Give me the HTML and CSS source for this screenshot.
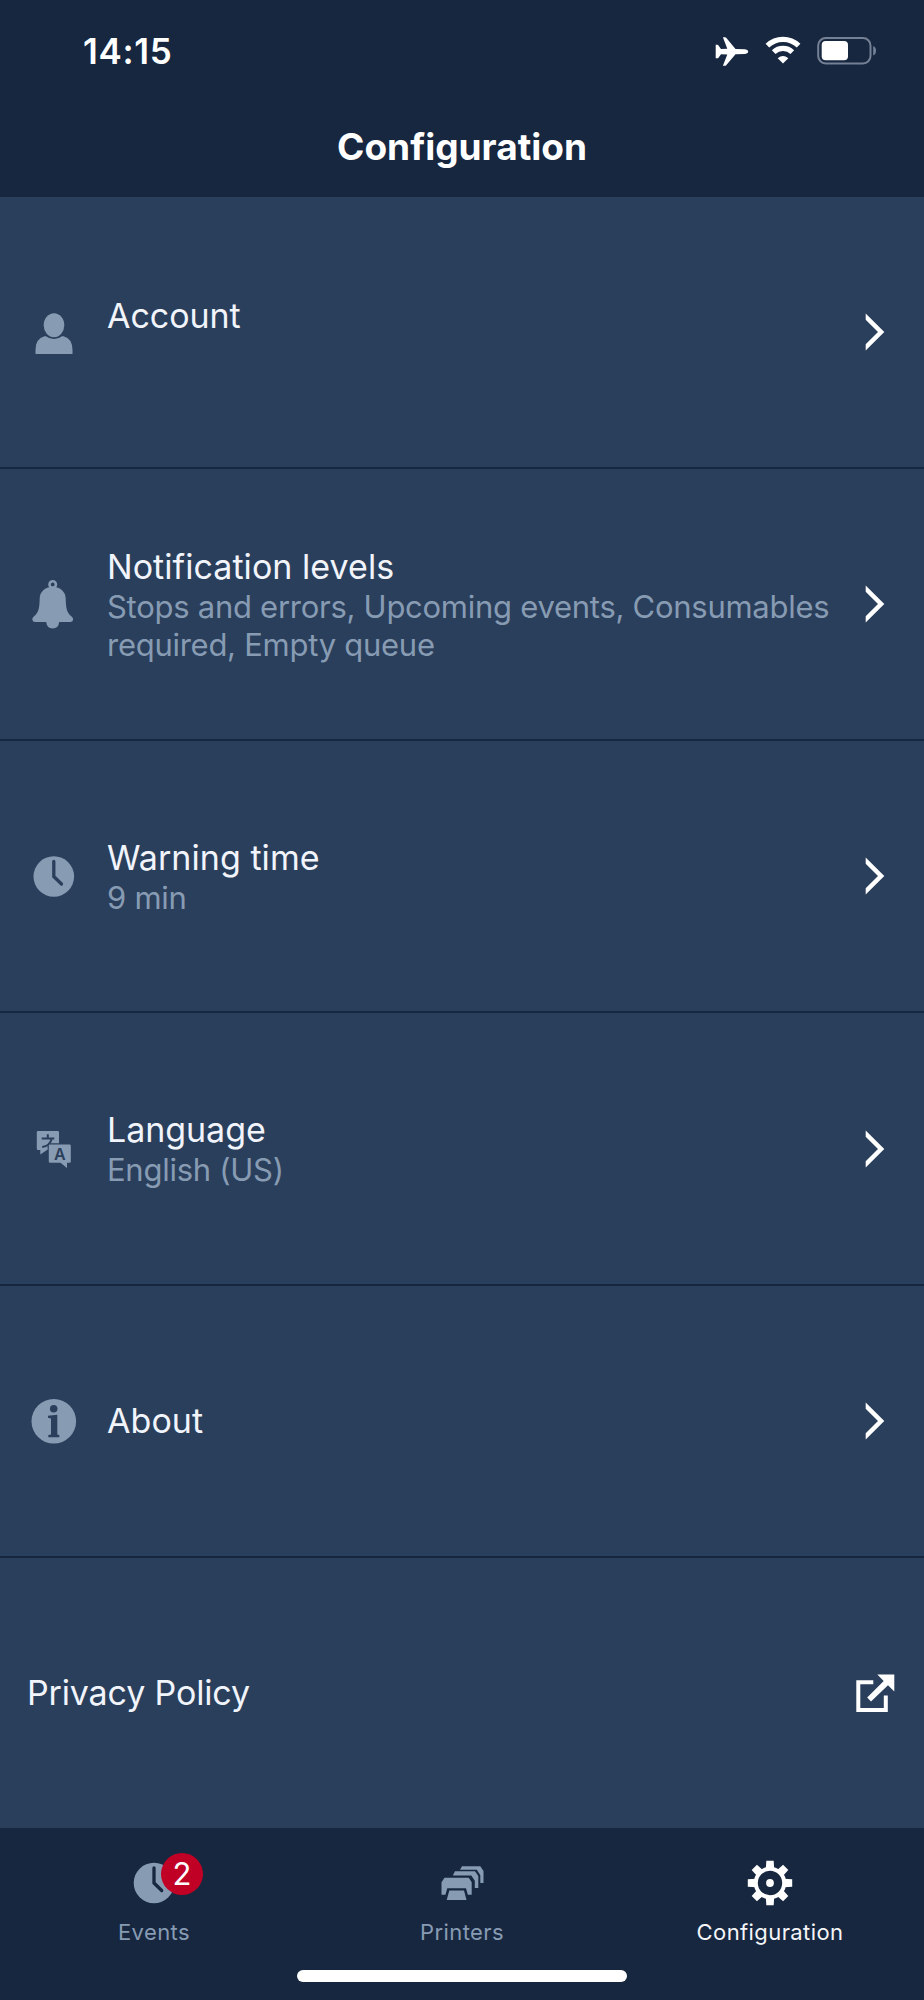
FILE: index.html
```html
<!DOCTYPE html>
<html lang="en">
<head>
<meta charset="utf-8">
<title>Configuration</title>
<link rel="stylesheet" href="styles.css">
</head>
<body>
<div class="screen">
  <header class="header">
    <div class="status">
      <span class="time">14:15</span>
      <svg class="status-icons" width="164" height="32" viewBox="0 0 164 32">
        <path fill="#fff" d="M33 13.2 C35.500 13.500 36.200 15 36.200 15.500 C36.200 16.300 35.500 17.600 33 17.900 L23.500 18.200 L14.200 29.200 Q13.800 29.700 13 29.700 L10.900 29.700 L15.300 18.400 L9 18.200 L6.300 21.900 Q6 22.300 5.500 22.300 L3.700 22.300 L3.700 8.800 L5.500 8.800 Q6 8.800 6.300 9.200 L9 12.900 L15.300 12.700 L10.900 1.200 L13 1.200 Q13.800 1.200 14.200 1.800 L23.500 12.900Z"/>
        <g fill="none" stroke="#fff" stroke-width="5.200">
          <path d="M55.400 9.700 A22.500 22.500 0 0 1 86.600 9.700"/>
          <path d="M61.700 16.200 A13.400 13.400 0 0 1 80.300 16.200"/>
        </g>
        <path fill="#fff" d="M71 27.600 L65.700 22.200 Q71 18 76.300 22.200Z"/>
        <rect x="106.200" y="2" width="52.300" height="25.500" rx="7.500" fill="none" stroke="#758094" stroke-width="2"/>
        <rect x="109.700" y="5" width="26.300" height="19.300" rx="4" fill="#fff"/>
        <path fill="#758094" d="M161.200 10 Q164 11 164 14.700 Q164 18.300 161.200 19.400Z"/>
      </svg>
    </div>
    <h1 class="title">Configuration</h1>
  </header>

  <main class="list">
    <a class="row">
      <svg class="icon" width="44" height="50" viewBox="0 0 44 50"><g fill="#879bb3"><ellipse cx="22" cy="18.200" rx="10.300" ry="12"/><path d="M3.500 47 V43 Q3.500 31.500 12.500 29.200 H14 Q17.500 32 22 32 Q26.500 32 30 29.200 H31.500 Q40.500 31.500 40.500 43 V47Z"/></g></svg>
      <div class="body body-raised"><div class="name">Account</div></div>
      <svg class="chevron" width="20" height="38" viewBox="0 0 20 38"><path fill="#fff" d="M.7 .5 L19.300 19 L.7 37.500 V31.300 L13 19 L.7 6.700Z"/></svg>
    </a>
    <a class="row">
      <svg class="icon" width="44" height="50" viewBox="0 0 44 50"><g fill="#879bb3"><circle cx="20.700" cy="5.500" r="3.200" fill="none" stroke="#879bb3" stroke-width="2.600"/><path d="M20.700 7.500 C28.500 8 33.500 12.800 33.700 19.500 C34 29 34.500 33.500 39.600 37.400 Q41.300 38.700 41.100 40.500 Q40.800 43 38.200 43 H27.200 Q26.500 49.500 20.700 49.500 Q14.900 49.500 14.200 43 H3.200 Q.6 43 .3 40.500 Q.1 38.700 1.800 37.400 C6.900 33.500 7.400 29 7.700 19.500 C7.900 12.800 12.900 8 20.700 7.500Z"/></g></svg>
      <div class="body body-levels"><div class="name name-wide">Notification levels</div><div class="detail">Stops and errors, Upcoming events, Consumables required, Empty queue</div></div>
      <svg class="chevron" width="20" height="38" viewBox="0 0 20 38"><path fill="#fff" d="M.7 .5 L19.300 19 L.7 37.500 V31.300 L13 19 L.7 6.700Z"/></svg>
    </a>
    <a class="row">
      <svg class="icon" width="44" height="50" viewBox="0 0 44 50"><circle cx="21.800" cy="25.500" r="20.300" fill="#879bb3"/><path d="M21.800 10.500 V25.500 L29.500 33" fill="none" stroke="#2a3f5c" stroke-width="3.300" stroke-linecap="round"/></svg>
      <div class="body body-pair"><div class="name name-wide">Warning time</div><div class="detail">9 min</div></div>
      <svg class="chevron" width="20" height="38" viewBox="0 0 20 38"><path fill="#fff" d="M.7 .5 L19.300 19 L.7 37.500 V31.300 L13 19 L.7 6.700Z"/></svg>
    </a>
    <a class="row">
      <svg class="icon" width="44" height="50" viewBox="0 0 44 50"><path fill="#879bb3" d="M6 7 H25.800 Q27 7 27 8.200 V19.200 H18 Q15.600 19.200 15.600 21.500 V26 H15 L8.300 30.500 V26 H6 Q4.800 26 4.800 24.800 V8.200 Q4.800 7 6 7Z"/><path fill="none" stroke="#2a3f5c" stroke-width="2" d="M9.700 14.500 H22.300 M15.800 10.200 V14.500 M19.800 14.500 Q18 22 10.200 23"/><path fill="#879bb3" d="M18 20.500 H37.600 Q38.800 20.500 38.800 21.700 V37.500 Q38.800 38.700 37.600 38.700 H35 V44 L28.500 38.700 H18 Q16.800 38.700 16.800 37.500 V21.700 Q16.800 20.500 18 20.500Z"/><text class="glyph" x="27.800" y="35.800" text-anchor="middle" fill="#2a3f5c">A</text></svg>
      <div class="body body-pair"><div class="name">Language</div><div class="detail">English (US)</div></div>
      <svg class="chevron" width="20" height="38" viewBox="0 0 20 38"><path fill="#fff" d="M.7 .5 L19.300 19 L.7 37.500 V31.300 L13 19 L.7 6.700Z"/></svg>
    </a>
    <a class="row">
      <svg class="icon icon-info" width="46" height="50" viewBox="0 0 46 50"><circle cx="22.800" cy="25.300" r="22.300" fill="#879bb3"/><g fill="#2a3f5c"><circle cx="22.700" cy="12.700" r="3.800"/><path d="M17 19.700 L26.300 18.700 V38.500 L28.300 39 V41.300 H17.300 V39 L20 38.500 V22.500 L17 21.700Z"/></g></svg>
      <div class="body"><div class="name name-wide">About</div></div>
      <svg class="chevron" width="20" height="38" viewBox="0 0 20 38"><path fill="#fff" d="M.7 .5 L19.300 19 L.7 37.500 V31.300 L13 19 L.7 6.700Z"/></svg>
    </a>
    <a class="row row-last">
      <div class="body"><div class="name name-privacy">Privacy Policy</div></div>
      <svg class="external" width="40" height="40" viewBox="0 0 40 40"><path fill="none" stroke="#fff" stroke-width="4" d="M17.300 9.300 H2.300 V37 H29.800 V22.500"/><path fill="#fff" d="M21.300 1.500 H38.300 V18.500 L32 12.300 L15 28.500 L11.200 24.500 L27.700 8Z"/></svg>
    </a>
  </main>

  <nav class="tabs">
    <a class="tab">
      <span class="tab-icon"><svg width="46" height="46" viewBox="0 0 46 46"><circle cx="23" cy="23" r="20.300" fill="#879bb3"/><path d="M23 8 V23 L30.700 30.500" fill="none" stroke="#172740" stroke-width="3.300" stroke-linecap="round"/></svg><span class="badge">2</span></span>
      <span class="label">Events</span>
    </a>
    <a class="tab">
      <span class="tab-icon"><svg width="46" height="46" viewBox="0 0 46 46"><g fill="#879bb3">
        <path d="M23 6.200 H41.300 L44.500 11 V23 H41.300 V15.200 L37.800 9.800 H21Z"/>
        <path d="M16 11.200 H36 L39.300 16 V28 H35.800 V20.800 L32.300 15.500 H13.800Z"/>
        <path d="M5.500 17.800 H29.700 L32.700 22.300 V34.800 H28.800 L27 28.300 H8.300 L6.400 34.800 H2.500 V22.300Z"/>
        <path d="M10.300 30.500 H25 L27.500 40 H7.700Z"/></g></svg></span>
      <span class="label">Printers</span>
    </a>
    <a class="tab tab-active">
      <span class="tab-icon"><svg width="46" height="46" viewBox="0 0 46 46"><g fill="#fff">
        <path id="tooth" d="M19.300 .8 H26.700 L27.200 9 H18.800Z"/>
        <use href="#tooth" transform="rotate(45 23 23)"/><use href="#tooth" transform="rotate(90 23 23)"/><use href="#tooth" transform="rotate(135 23 23)"/><use href="#tooth" transform="rotate(180 23 23)"/><use href="#tooth" transform="rotate(225 23 23)"/><use href="#tooth" transform="rotate(270 23 23)"/><use href="#tooth" transform="rotate(315 23 23)"/>
        <circle cx="23" cy="23" r="3.900"/></g><circle cx="23" cy="23" r="14.200" fill="none" stroke="#fff" stroke-width="4"/></svg></span>
      <span class="label">Configuration</span>
    </a>
    <span class="home"></span>
  </nav>
</div>
</body>
</html>
```
FILE: styles.css
```css
* { box-sizing: border-box; }
body { margin: 0; background: #172740; font-family: Inter, "Liberation Sans", sans-serif; }
.screen { width: 924px; height: 2000px; display: flex; flex-direction: column; background: #2a3f5c; overflow: hidden; }
.header { height: 196.500px; flex: none; background: #172740; color: #fff; }
.status { height: 101px; padding: 0 48px 0 83px; display: flex; align-items: center; justify-content: space-between; }
.time { font-size: 35px; font-weight: 600; line-height: 40px; letter-spacing: .7px; }
.status-icons { display: block; margin-top: 2px; }
.title { margin: 24px 0 0; text-align: center; font-size: 37px; font-weight: 700; line-height: 44px; }
.list { flex: 1; }
.row { height: 272.300px; display: flex; align-items: center; border-bottom: 2px solid #172740; padding: 0 39px 0 32px; }
.icon { flex: none; width: 44px; margin-right: 31px; }
.icon-info { width: 46px; margin-left: -1px; margin-right: 30px; }
.body { flex: 1; min-width: 0; }
.body-raised { padding-bottom: 32px; }
.body-levels { padding-top: 3px; }
.body-pair { padding-top: 2px; }
.name { font-size: 34px; line-height: 40px; color: #f1f4fa; white-space: nowrap; letter-spacing: -.05px; }
.name-wide { letter-spacing: .05px; }
.name-privacy { letter-spacing: -.15px; }
.detail { font-size: 31px; line-height: 38px; margin-top: 1px; color: #879bb3; letter-spacing: -.27px; }
.chevron { flex: none; }
.glyph { font-family: Inter, sans-serif; font-size: 16px; font-weight: 600; }
.row-last { height: 270px; border: 0; padding: 0 28px 0 27px; }
.external { flex: none; }
.tabs { height: 172px; flex: none; position: relative; display: flex; background: #172740; }
.tab { flex: 1; display: flex; flex-direction: column; align-items: center; padding-top: 32px; color: #879bb3; }
.tab-active { color: #f4f5f8; }
.tab-icon { position: relative; width: 46px; height: 46px; }
.tab-icon svg { display: block; }
.badge { position: absolute; left: 30px; top: -7px; width: 42px; height: 42px; border-radius: 50%; background: #c00024; color: #fff; font-size: 31px; line-height: 42px; text-align: center; }
.label { margin-top: 12px; font-size: 22px; line-height: 28px; letter-spacing: .4px; }
.home { position: absolute; left: 297px; top: 142px; width: 330px; height: 12px; border-radius: 6px; background: #fff; }
```
